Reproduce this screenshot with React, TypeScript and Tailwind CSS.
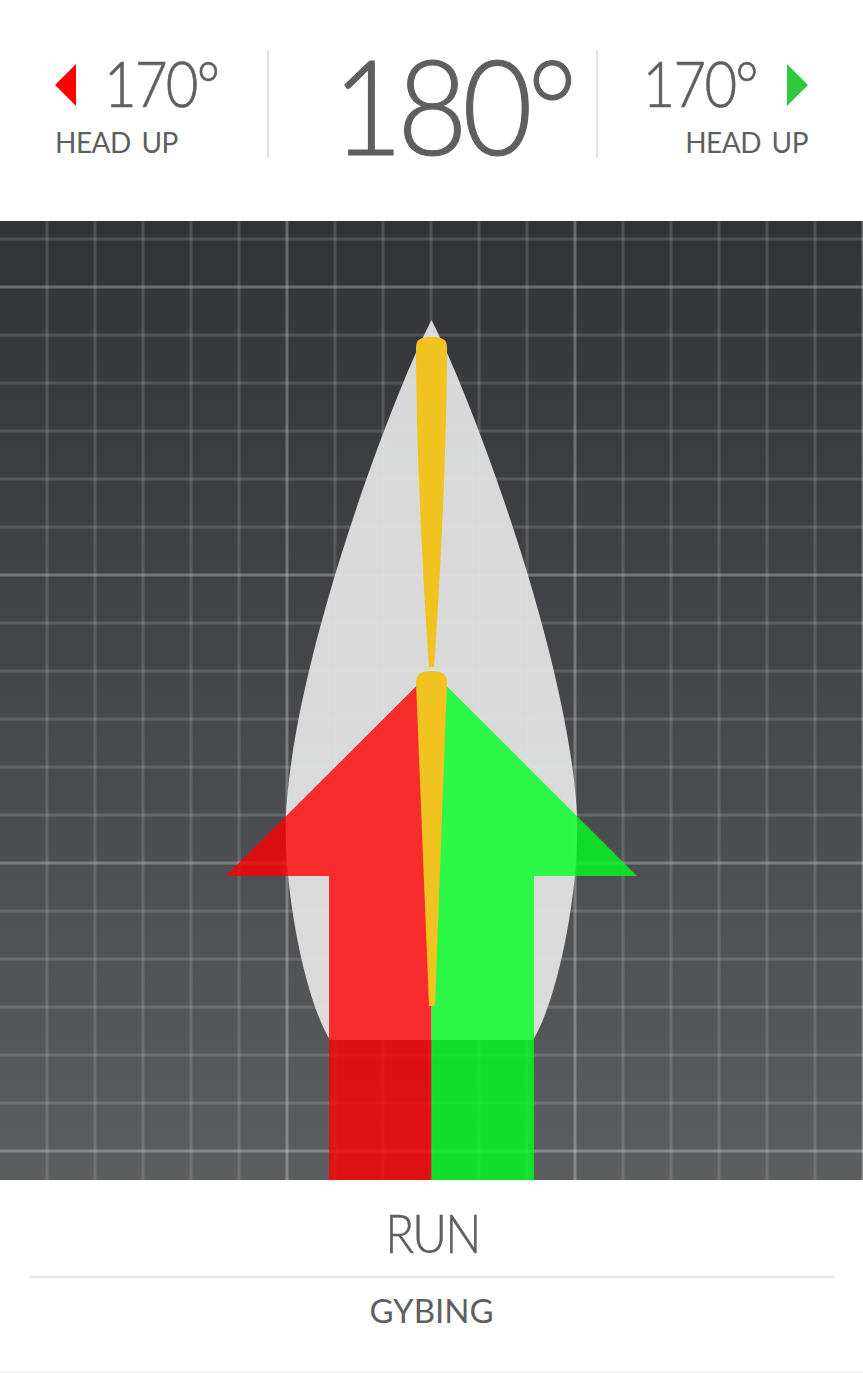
const TEXT = 'text-[#5e5f61]';

const GridPanel = () => {
  const cols = Array.from({ length: 18 }, (_, i) => i + 1);
  const rows = Array.from({ length: 20 }, (_, i) => i + 5);

  return (
    <div className="h-[959px] w-full bg-gradient-to-b from-[#323337] to-[#5c5d5f]">
      <svg width="863" height="959" viewBox="0 221 863 959" className="block">
        {/* grid */}
        {cols.map((k) => (
          <rect
            key={'v' + k}
            x={48 * k - 2.5}
            y={221}
            width={3}
            height={959}
            fill="#ffffff"
            fillOpacity={k % 6 === 0 ? 0.27 : 0.14}
          />
        ))}
        {rows.map((k) => (
          <rect
            key={'h' + k}
            x={0}
            y={48 * k - 2.5}
            width={863}
            height={3}
            fill="#ffffff"
            fillOpacity={k % 6 === 0 ? 0.27 : 0.14}
          />
        ))}

        {/* sail */}
        <path
          d="M431.5 320 C395 390 300 640 287 800 C280 880 305 1000 330 1040 L533 1040 C558 1000 583 880 576 800 C563 640 468 390 431.5 320 Z"
          fill="#e6e6e6"
          fillOpacity={0.92}
        />

        {/* arrow halves */}
        <polygon points="431.5,671 226,876 329,876 329,1180 431.5,1180" fill="rgba(255,0,0,0.8)" />
        <polygon points="431.5,671 637,876 534,876 534,1180 431.5,1180" fill="rgba(0,255,34,0.8)" />

        {/* needles */}
        <path
          d="M416 347 C416 339 422 337 431.5 337 C441 337 447 339 447 347 C447 450 439 600 434 667 L429 667 C424 600 416 450 416 347 Z"
          fill="#f1c320"
        />
        <path
          d="M416 682 C416 674 422 671 431.5 671 C441 671 447 674 447 682 L435 1006 L429 1006 Z"
          fill="#f1c320"
        />
      </svg>
    </div>
  );
};

export default function App() {
  return (
    <div className={`w-[863px] h-[1373px] bg-white flex flex-col font-['Lato','Open_Sans',sans-serif] font-normal ${TEXT}`}>
      {/* heading readout */}
      <header className="h-[221px] flex items-start shrink-0">
        <div className="w-[267px] pl-[55px] pt-[51px]">
          <div className="flex items-center gap-[28px]">
            <svg width="21" height="42" viewBox="0 0 21 42" className="mt-[4px]">
              <polygon points="0,21 21,0 21,42" fill="#ff0000" />
            </svg>
            <span className="inline-block origin-left scale-x-[0.88] text-[64px] leading-none font-light tracking-[-2px] [-webkit-text-stroke:0.7px_#5e5f61]">170°</span>
          </div>
          <div className="mt-[13px] text-[28px] leading-none tracking-[-0.5px] [word-spacing:4px]">HEAD UP</div>
        </div>

        <div className="w-[2px] h-[108px] mt-[50px] bg-[#e2e2e2]" />

        <div className="flex-1 pt-[38px] pl-[40px] text-center">
          <span className="inline-block origin-center scale-x-[0.92] text-[132px] leading-none font-light tracking-[-6px] [-webkit-text-stroke:1.2px_#5e5f61]">180°</span>
        </div>

        <div className="w-[2px] h-[108px] mt-[50px] bg-[#e2e2e2]" />

        <div className="w-[265px] pr-[55px] pt-[51px] flex flex-col items-end">
          <div className="flex items-center gap-[30px]">
            <span className="inline-block origin-right scale-x-[0.88] text-[64px] leading-none font-light tracking-[-2px] [-webkit-text-stroke:0.7px_#5e5f61]">170°</span>
            <svg width="21" height="42" viewBox="0 0 21 42" className="mt-[4px]">
              <polygon points="0,0 21,21 0,42" fill="#2fc93f" />
            </svg>
          </div>
          <div className="mt-[13px] text-[28px] leading-none tracking-[-0.5px] [word-spacing:4px]">HEAD UP</div>
        </div>
      </header>

      <GridPanel />

      {/* point of sail */}
      <footer className="flex-1 flex flex-col items-center border-b-2 border-[#f3f3f3]">
        <div className="pt-[26px] pl-[2px]">
          <span className="inline-block origin-center scale-x-[0.9] text-[53px] leading-none font-light tracking-[-2px] [-webkit-text-stroke:0.5px_#5e5f61]">RUN</span>
        </div>
        <div className="mt-[17px] w-[804px] h-[2px] bg-[#e6e6e6]" />
        <div className="mt-[16px] text-[33px] leading-none">GYBING</div>
      </footer>
    </div>
  );
}
